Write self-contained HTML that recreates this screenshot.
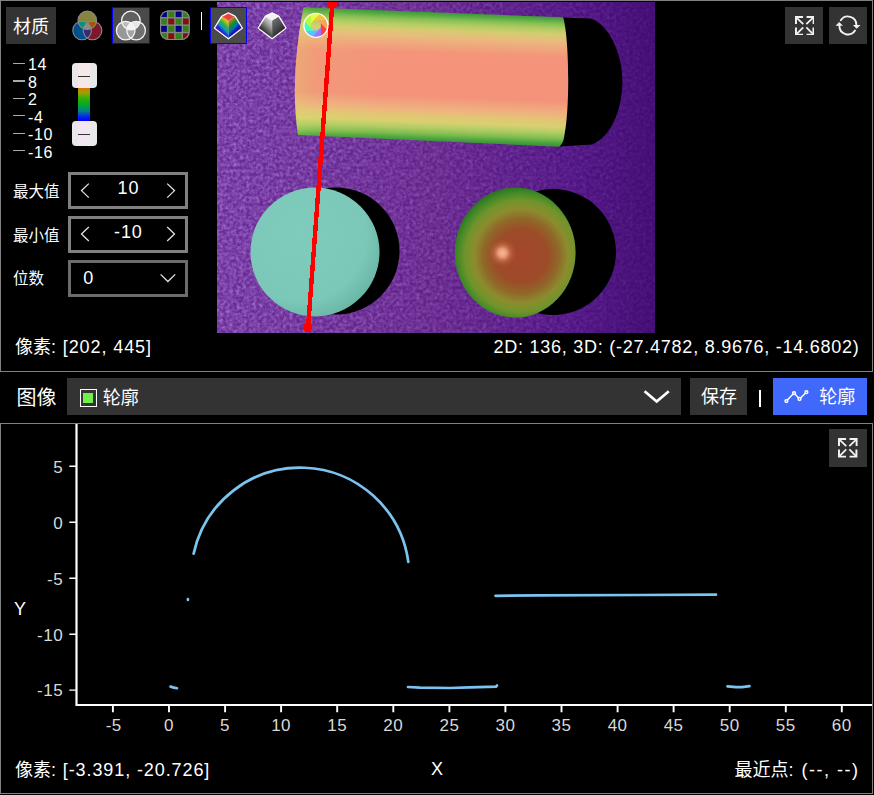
<!DOCTYPE html>
<html lang="zh">
<head>
<meta charset="utf-8">
<title>轮廓</title>
<style>
html,body{margin:0;padding:0;background:#000;}
body{width:874px;height:795px;position:relative;overflow:hidden;color:#fff;
  font-family:"Liberation Sans","Noto Sans CJK SC",sans-serif;font-size:18px;}
.abs{position:absolute;}
.panel{position:absolute;left:0;width:871px;border:1px solid #808080;background:#000;box-sizing:content-box;}
#top{top:0;height:370px;}
#bot{top:423px;height:369px;}
.btn{position:absolute;background:#333;}
.t{position:absolute;white-space:nowrap;line-height:1;letter-spacing:0.9px;}
.cj{letter-spacing:0;}
.sel{position:absolute;background:#4a4a4a;border:1px solid #0000ff;box-sizing:border-box;}
.tick{position:absolute;left:13px;width:12px;height:1px;background:#aaa;}
.tl{position:absolute;left:28px;font-size:16px;line-height:1;letter-spacing:0.6px;white-space:nowrap;}
.box{position:absolute;left:68px;width:120px;height:37px;border:3px solid #808080;box-sizing:border-box;}
.handle{position:absolute;left:71.500px;width:25px;height:25px;border-radius:4px;background:linear-gradient(90deg,#e8e8e8 0,#e8e8e8 6.500px,#f7e8e8 6.500px,#f7e8e8 18.500px,#e8e8e8 18.500px);}
.handle i{position:absolute;left:6.500px;top:13px;width:12px;height:1px;background:#333;}
</style>
</head>
<body>

<!-- ================= TOP PANEL ================= -->
<div class="panel" id="top"></div>

<!-- image area -->
<svg class="abs" style="left:217px;top:2px" width="438" height="331" viewBox="217 2 438 331">
  <defs>
    <linearGradient id="bgp" x1="0" y1="0" x2="1" y2="0">
      <stop offset="0" stop-color="#682e95"/>
      <stop offset="0.5" stop-color="#612286"/>
      <stop offset="0.8" stop-color="#4f1382"/>
      <stop offset="1" stop-color="#410a71"/>
    </linearGradient>
    <linearGradient id="cyl" gradientUnits="userSpaceOnUse" x1="430" y1="11.800" x2="425.300" y2="141">
      <stop offset="0" stop-color="#3c9438"/>
      <stop offset="0.03" stop-color="#58ac44"/>
      <stop offset="0.06" stop-color="#88c054"/>
      <stop offset="0.1" stop-color="#b4cc64"/>
      <stop offset="0.14" stop-color="#d4cc70"/>
      <stop offset="0.19" stop-color="#e8bc7c"/>
      <stop offset="0.25" stop-color="#f0a87c"/>
      <stop offset="0.32" stop-color="#f4947a"/>
      <stop offset="0.65" stop-color="#f4927a"/>
      <stop offset="0.75" stop-color="#f0b080"/>
      <stop offset="0.8" stop-color="#e4c474"/>
      <stop offset="0.853" stop-color="#d8d070"/>
      <stop offset="0.9" stop-color="#b0cc64"/>
      <stop offset="0.945" stop-color="#80bc50"/>
      <stop offset="0.975" stop-color="#50a840"/>
      <stop offset="1" stop-color="#3c9438"/>
    </linearGradient>
    <linearGradient id="cyl2" gradientUnits="userSpaceOnUse" x1="294" y1="0" x2="380" y2="0">
      <stop offset="0" stop-color="#d8e070" stop-opacity="0.3"/>
      <stop offset="0.25" stop-color="#d8e070" stop-opacity="0.1"/>
      <stop offset="1" stop-color="#d8e070" stop-opacity="0"/>
    </linearGradient>
    <radialGradient id="disc" cx="300" cy="235" r="95" gradientUnits="userSpaceOnUse">
      <stop offset="0" stop-color="#80ccbc"/>
      <stop offset="0.7" stop-color="#7cc8b8"/>
      <stop offset="0.9" stop-color="#6cb8a8"/>
      <stop offset="1" stop-color="#4c9484"/>
    </radialGradient>
    <radialGradient id="sph" cx="521" cy="256" r="70" gradientUnits="userSpaceOnUse">
      <stop offset="0" stop-color="#a6462c"/>
      <stop offset="0.38" stop-color="#9c4c28"/>
      <stop offset="0.54" stop-color="#906828"/>
      <stop offset="0.67" stop-color="#8c8c2e"/>
      <stop offset="0.8" stop-color="#70942c"/>
      <stop offset="0.92" stop-color="#3c8826"/>
      <stop offset="1" stop-color="#2c7020"/>
    </radialGradient>
    <filter id="noise" x="0" y="0" width="100%" height="100%" color-interpolation-filters="sRGB">
      <feTurbulence type="fractalNoise" baseFrequency="0.3" numOctaves="3" seed="11" result="n"/>
      <feColorMatrix in="n" type="matrix" values="0 0 0 0 0.686  0 0 0 0 0.47  0 0 0 0 0.863  1 1 0 0 -0.700"/>
      <feGaussianBlur stdDeviation="0.45"/>
    </filter>
    <linearGradient id="nmg" x1="0" y1="0" x2="1" y2="0">
      <stop offset="0" stop-color="#fff"/>
      <stop offset="0.5" stop-color="#8c8c8c"/>
      <stop offset="0.8" stop-color="#4d4d4d"/>
      <stop offset="1" stop-color="#262626"/>
    </linearGradient>
    <mask id="nmask" maskUnits="userSpaceOnUse" x="217" y="2" width="438" height="331"><rect x="217" y="2" width="438" height="331" fill="url(#nmg)"/></mask>
    <radialGradient id="hl" cx="502.400" cy="253" r="14" gradientUnits="userSpaceOnUse">
      <stop offset="0" stop-color="#fcb898"/>
      <stop offset="0.3" stop-color="#f4a484" stop-opacity="0.9"/>
      <stop offset="0.65" stop-color="#d07850" stop-opacity="0.4"/>
      <stop offset="1" stop-color="#c06030" stop-opacity="0"/>
    </radialGradient>
  </defs>
  <rect x="217" y="2" width="438" height="331" fill="url(#bgp)"/>
  <rect x="217" y="2" width="438" height="331" fill="#fff" filter="url(#noise)" mask="url(#nmask)"/>
  <!-- cylinder shadow -->
  <path d="M560 17.500L590 18.600C607 23 622 50 622.400 82C622 110 611 137 592 144.500L560 146.500Z" fill="#000"/>
  <!-- cylinder -->
  <path d="M303.500 7.300L563.200 17.300C569.500 40 569.800 108 564.600 134Q563.500 144 559 146.700L298 135Q289.500 78 303.500 7.300Z" fill="url(#cyl)"/>
  <path d="M303.500 7.300L563.200 17.300C569.500 40 569.800 108 564.600 134Q563.500 144 559 146.700L298 135Q289.500 78 303.500 7.300Z" fill="url(#cyl2)"/>
  <!-- disc -->
  <circle cx="336" cy="251" r="63.5" fill="#000"/>
  <circle cx="315" cy="252" r="64.5" fill="url(#disc)"/>
  <!-- sphere -->
  <circle cx="553" cy="252" r="63" fill="#000"/>
  <ellipse cx="515.200" cy="252.600" rx="60.400" ry="65" fill="url(#sph)"/>
  <circle cx="502.400" cy="253" r="14" fill="url(#hl)"/>
</svg>

<svg class="abs" style="left:296px;top:2px" width="50" height="334" viewBox="296 2 50 334">
  <line x1="332.300" y1="4" x2="308" y2="328" stroke="#f00" stroke-width="4.400" shape-rendering="crispEdges"/>
  <circle cx="332.100" cy="4" r="5" fill="#f00"/>
  <circle cx="307.600" cy="327.400" r="4.700" fill="#f00"/>
</svg>
<!-- top-left toolbar -->
<div class="btn" style="left:6px;top:7px;width:50px;height:37px;"></div>
<div class="t cj" style="left:13px;top:17.5px;font-size:18px;">材质</div>

<div class="sel" style="left:112px;top:7px;width:38px;height:37px;"></div>
<div class="sel" style="left:210px;top:7px;width:37px;height:37px;"></div>
<div class="abs" style="left:200.500px;top:12px;width:1.800px;height:18px;background:#fff;"></div>

<svg class="abs" style="left:60px;top:0" width="280" height="50" viewBox="60 0 280 50">
<defs><clipPath id="v1t"><circle cx="87.3" cy="20.4" r="9.3"/></clipPath><clipPath id="v1l"><circle cx="82.1" cy="30.5" r="9.3"/></clipPath><clipPath id="v1r"><circle cx="92.5" cy="30.5" r="9.3"/></clipPath></defs><circle cx="87.3" cy="20.4" r="9.3" fill="#86843e"/><circle cx="82.1" cy="30.5" r="9.3" fill="#00508c"/><circle cx="92.5" cy="30.5" r="9.3" fill="#7e1828"/><circle cx="82.1" cy="30.5" r="9.3" fill="#009478" clip-path="url(#v1t)"/><circle cx="92.5" cy="30.5" r="9.3" fill="#a85400" clip-path="url(#v1t)"/><circle cx="92.5" cy="30.5" r="9.3" fill="#3c2870" clip-path="url(#v1l)"/><g clip-path="url(#v1t)"><circle cx="92.5" cy="30.5" r="9.3" fill="#8c8c8c" clip-path="url(#v1l)"/></g><circle cx="87.3" cy="20.4" r="9.3" fill="none" stroke="#888" stroke-width="1.1"/><circle cx="82.1" cy="30.5" r="9.3" fill="none" stroke="#888" stroke-width="1.1"/><circle cx="92.5" cy="30.5" r="9.3" fill="none" stroke="#888" stroke-width="1.1"/>
<defs><clipPath id="v2t"><circle cx="130.9" cy="20.5" r="9.3"/></clipPath><clipPath id="v2l"><circle cx="125.7" cy="30.6" r="9.3"/></clipPath><clipPath id="v2r"><circle cx="136.1" cy="30.6" r="9.3"/></clipPath></defs><circle cx="130.9" cy="20.5" r="9.3" fill="#606060"/><circle cx="125.7" cy="30.6" r="9.3" fill="#989898"/><circle cx="136.1" cy="30.6" r="9.3" fill="#707070"/><circle cx="125.7" cy="30.6" r="9.3" fill="#bcbcbc" clip-path="url(#v2t)"/><circle cx="136.1" cy="30.6" r="9.3" fill="#e4e4e4" clip-path="url(#v2t)"/><circle cx="136.1" cy="30.6" r="9.3" fill="#a4a4a4" clip-path="url(#v2l)"/><g clip-path="url(#v2t)"><circle cx="136.1" cy="30.6" r="9.3" fill="#f2f2f2" clip-path="url(#v2l)"/></g><circle cx="130.9" cy="20.5" r="9.3" fill="none" stroke="#f4f4f4" stroke-width="1.3"/><circle cx="125.7" cy="30.6" r="9.3" fill="none" stroke="#f4f4f4" stroke-width="1.3"/><circle cx="136.1" cy="30.6" r="9.3" fill="none" stroke="#f4f4f4" stroke-width="1.3"/>
<defs><clipPath id="bay"><rect x="160.2" y="10.4" width="29.5" height="29.5" rx="8" ry="8"/></clipPath></defs><g clip-path="url(#bay)"><rect x="160.2" y="10.4" width="29.5" height="29.5" fill="#858585"/><rect x="160.90" y="11.10" width="5.97" height="5.97" fill="#000080"/><rect x="168.27" y="11.10" width="5.97" height="5.97" fill="#34801f"/><rect x="175.65" y="11.10" width="5.97" height="5.97" fill="#000080"/><rect x="183.02" y="11.10" width="5.97" height="5.97" fill="#34801f"/><rect x="160.90" y="18.47" width="5.97" height="5.97" fill="#34801f"/><rect x="168.27" y="18.47" width="5.97" height="5.97" fill="#80120a"/><rect x="175.65" y="18.47" width="5.97" height="5.97" fill="#34801f"/><rect x="183.02" y="18.47" width="5.97" height="5.97" fill="#80120a"/><rect x="160.90" y="25.85" width="5.97" height="5.97" fill="#000080"/><rect x="168.27" y="25.85" width="5.97" height="5.97" fill="#34801f"/><rect x="175.65" y="25.85" width="5.97" height="5.97" fill="#000080"/><rect x="183.02" y="25.85" width="5.97" height="5.97" fill="#34801f"/><rect x="160.90" y="33.23" width="5.97" height="5.97" fill="#34801f"/><rect x="168.27" y="33.23" width="5.97" height="5.97" fill="#80120a"/><rect x="175.65" y="33.23" width="5.97" height="5.97" fill="#34801f"/><rect x="183.02" y="33.23" width="5.97" height="5.97" fill="#80120a"/></g><rect x="160.6" y="10.8" width="28.7" height="28.7" rx="8" ry="8" fill="none" stroke="#858585" stroke-width="1.2"/>
<defs><linearGradient id="p1l" gradientUnits="userSpaceOnUse" x1="226.0" y1="19" x2="215.5" y2="29.5"><stop offset="0" stop-color="#e8b820"/><stop offset="0.15" stop-color="#b4c020"/><stop offset="0.35" stop-color="#30b040"/><stop offset="0.55" stop-color="#10a0b0"/><stop offset="0.75" stop-color="#1030e0"/><stop offset="0.9" stop-color="#5010c0"/><stop offset="1" stop-color="#a000a0"/></linearGradient><linearGradient id="p1r" gradientUnits="userSpaceOnUse" x1="230.8" y1="19" x2="241.3" y2="29.5"><stop offset="0" stop-color="#b09018"/><stop offset="0.15" stop-color="#708c18"/><stop offset="0.35" stop-color="#108840"/><stop offset="0.55" stop-color="#087898"/><stop offset="0.75" stop-color="#0818c8"/><stop offset="0.9" stop-color="#4808a8"/><stop offset="1" stop-color="#900090"/></linearGradient></defs><polygon points="228.4,12.7 235.3,16.1 242.6,28.2 228.4,39.0 214.2,28.2 221.5,16.1" fill="#fff" stroke="#fff" stroke-width="1" stroke-linejoin="round"/><polygon points="222.2,16.700 228.4,20.600 228.4,37.900 215.2,28.100" fill="url(#p1l)"/><polygon points="234.6,16.700 228.4,20.600 228.4,37.900 241.6,28.100" fill="url(#p1r)"/><polygon points="228.4,13.600 234.6,16.700 228.4,20.600 222.2,16.700" fill="#f04040"/>
<defs><linearGradient id="p2l" gradientUnits="userSpaceOnUse" x1="269.70000000000005" y1="19" x2="259.20000000000005" y2="29.5"><stop offset="0" stop-color="#d4d4d4"/><stop offset="0.35" stop-color="#9c9c9c"/><stop offset="0.7" stop-color="#545454"/><stop offset="1" stop-color="#181818"/></linearGradient><linearGradient id="p2r" gradientUnits="userSpaceOnUse" x1="274.5" y1="19" x2="285.0" y2="29.5"><stop offset="0" stop-color="#6c6c6c"/><stop offset="0.4" stop-color="#545454"/><stop offset="0.8" stop-color="#343434"/><stop offset="1" stop-color="#1c1c1c"/></linearGradient></defs><polygon points="272.1,12.7 279.0,16.1 286.3,28.2 272.1,39.0 257.9,28.2 265.2,16.1" fill="#fff" stroke="#fff" stroke-width="1" stroke-linejoin="round"/><polygon points="265.9,16.700 272.1,20.600 272.1,37.900 258.9,28.100" fill="url(#p2l)"/><polygon points="278.3,16.700 272.1,20.600 272.1,37.900 285.3,28.100" fill="url(#p2r)"/><polygon points="272.1,13.600 278.3,16.700 272.1,20.600 265.9,16.700" fill="#f2f2f2"/>
<path d="M321.00 23.29L326.95 29.24A11.7 11.7 0 0 1 321.00 35.93Z" fill="#ff4040" stroke="#ff4040" stroke-width="0.3"/><path d="M321.00 27.51L321.00 35.93A11.7 11.7 0 0 1 312.06 36.45Z" fill="#9878ff" stroke="#9878ff" stroke-width="0.3"/><path d="M318.01 30.50L312.06 36.45A11.7 11.7 0 0 1 305.37 30.50Z" fill="#50c8ff" stroke="#50c8ff" stroke-width="0.3"/><path d="M313.79 30.50L305.37 30.50A11.7 11.7 0 0 1 304.85 21.56Z" fill="#40ffc0" stroke="#40ffc0" stroke-width="0.3"/><path d="M310.80 27.51L304.85 21.56A11.7 11.7 0 0 1 310.80 14.87Z" fill="#b0ff40" stroke="#b0ff40" stroke-width="0.3"/><path d="M310.80 23.29L310.80 14.87A11.7 11.7 0 0 1 319.74 14.35Z" fill="#e8ff40" stroke="#e8ff40" stroke-width="0.3"/><path d="M313.79 20.30L319.74 14.35A11.7 11.7 0 0 1 326.43 20.30Z" fill="#f0c840" stroke="#f0c840" stroke-width="0.3"/><path d="M318.01 20.30L326.43 20.30A11.7 11.7 0 0 1 326.95 29.24Z" fill="#ffa060" stroke="#ffa060" stroke-width="0.3"/><circle cx="315.9" cy="25.4" r="12.0" fill="none" stroke="#fff" stroke-width="1.3"/>
</svg>
<!-- colour scale -->
<div class="tick" style="top:63px"></div><div class="tl" style="top:57px">14</div>
<div class="tick" style="top:80px;height:2px"></div><div class="tl" style="top:74.700px">8</div>
<div class="tick" style="top:98px"></div><div class="tl" style="top:92px">2</div>
<div class="tick" style="top:115px"></div><div class="tl" style="top:109.500px">-4</div>
<div class="tick" style="top:133px"></div><div class="tl" style="top:127px">-10</div>
<div class="tick" style="top:150px"></div><div class="tl" style="top:144.500px">-16</div>

<div class="abs" style="left:78px;top:88px;width:12px;height:33px;background:linear-gradient(180deg,#d87800 0,#a0a000 14%,#30b000 32%,#00a830 52%,#008090 70%,#0020f0 88%,#0000ff 100%);"></div>
<div class="handle" style="top:63px"><i></i></div>
<div class="handle" style="top:121px;background:linear-gradient(90deg,#e8e8e8 0,#e8e8e8 6.500px,#f3e6f3 6.500px,#f3e6f3 18.500px,#e8e8e8 18.500px);"><i></i></div>

<!-- numeric boxes -->
<div class="t cj" style="left:13px;top:184px;font-size:15.500px;">最大值</div>
<div class="box" style="top:172px;"></div>
<div class="t" style="left:117.500px;top:179.300px;font-size:18px;">10</div>

<div class="t cj" style="left:13px;top:227.500px;font-size:15.500px;">最小值</div>
<div class="box" style="top:215.500px;"></div>
<div class="t" style="left:114px;top:222.800px;font-size:18px;">-10</div>

<div class="t cj" style="left:13px;top:271px;font-size:15.500px;">位数</div>
<div class="box" style="top:259.500px;border-color:#6c6c6c;"></div>
<div class="t" style="left:83.300px;top:268.500px;font-size:18px;">0</div>

<svg class="abs" style="left:68px;top:172px" width="121" height="126" viewBox="68 172 121 126" fill="none" stroke="#e4e4e4" stroke-width="1.300">
  <path d="M88.800 183.600L81.500 190.600L88.800 197.600M167.200 183.600L174.500 190.600L167.200 197.600"/>
  <path d="M88.800 227L81.500 234L88.800 241M167.200 227L174.500 234L167.200 241"/>
  <path d="M160.600 274.400L167.900 281.500L175.200 274.400"/>
</svg>
<!-- status texts -->
<div class="t" style="left:15px;top:338px;font-size:18px;"><span class="cj">像素</span>: [202, 445]</div>
<div class="t" style="right:14.500px;top:338px;font-size:18px;letter-spacing:0.75px;">2D: 136, 3D: (-27.4782, 8.9676, -14.6802)</div>

<!-- top-right buttons -->
<div class="btn" style="left:785px;top:7px;width:38px;height:37px;"></div>
<svg class="abs" style="left:794.600px;top:15.800px" width="19.600" height="19.600" viewBox="0 0 20 20"><g fill="none" stroke="#f2f2f2" stroke-width="2" stroke-linejoin="miter"><path d="M1 8.200V1H8.200M18.800 11.800V19H11.800M11.800 1H19V8.200M8.200 19H1V11.800"/><path d="M1.300 1.300L8.400 8.400M18.700 18.700L11.600 11.600M18.700 1.300L11.600 8.400M1.300 18.700L8.400 11.600" stroke-width="1.800"/></g></svg>
<div class="btn" style="left:829px;top:7px;width:38px;height:37px;"></div>
<svg class="abs" style="left:829px;top:7px" width="38" height="37" viewBox="829 7 38 37">
  <g fill="none" stroke="#f2f2f2" stroke-width="1.900" stroke-linecap="round">
    <path d="M840.800 20.300A8.500 8.500 0 0 1 856.400 25"/>
    <path d="M855 30.600A8.500 8.500 0 0 1 839.400 25.800"/>
  </g>
  <path d="M852.900 25H860.500L856.700 28.700Z M835.500 25.800H842.900L839.200 22.100Z" fill="#f2f2f2"/>
</svg>

<!-- ================= MIDDLE TOOLBAR ================= -->
<div class="t cj" style="left:16.500px;top:388px;font-size:20px;">图像</div>
<div class="btn" style="left:67px;top:378px;width:614px;height:37px;"></div>
<div class="abs" style="left:80px;top:389px;width:17px;height:18px;border:1.5px solid #fff;box-sizing:border-box;"></div>
<div class="abs" style="left:83px;top:393px;width:10.300px;height:10.200px;background:#70f048;"></div>
<div class="t cj" style="left:102.800px;top:388.500px;font-size:18px;">轮廓</div>
<div class="btn" style="left:690px;top:378px;width:57px;height:37px;"></div>
<div class="t cj" style="left:701px;top:388px;font-size:18px;">保存</div>
<div class="abs" style="left:759px;top:390px;width:2px;height:17px;background:#fff;"></div>
<div class="btn" style="left:773px;top:378px;width:94px;height:37px;background:#4068fa;"></div>
<div class="t cj" style="left:819.200px;top:388px;font-size:18px;">轮廓</div>

<svg class="abs" style="left:640px;top:385px" width="36" height="24" viewBox="640 385 36 24" fill="none" stroke="#fff" stroke-width="2.600">
  <path d="M644.600 391.200L656.700 401.600L668.800 391.200"/>
</svg>
<svg class="abs" style="left:780px;top:386px" width="34" height="22" viewBox="780 386 34 22" fill="none" stroke="#fff" stroke-width="1.500">
  <path d="M786.400 401.100L794 393.100L799.500 399L806.400 392.200"/>
  <g fill="#4068fa"><circle cx="786.400" cy="401.100" r="1.400"/><circle cx="794" cy="393.100" r="1.400"/><circle cx="799.500" cy="399" r="1.400"/><circle cx="806.400" cy="392.200" r="1.400"/></g>
</svg>
<!-- ================= BOTTOM PANEL ================= -->
<div class="panel" id="bot"></div>
<svg class="abs" style="left:0;top:424px" width="872" height="369" viewBox="0 424 872 369" font-family="'Liberation Sans',sans-serif" font-size="17" fill="#d8d8d8">
<path d="M76.500 424V705H872" fill="none" stroke="#fff" stroke-width="2.200"/>
<path d="M112.9 705v7.200M169.0 705v7.200M225.1 705v7.200M281.1 705v7.200M337.2 705v7.200M393.3 705v7.200M449.4 705v7.200M505.4 705v7.200M561.5 705v7.200M617.6 705v7.200M673.6 705v7.200M729.7 705v7.200M785.8 705v7.200M841.8 705v7.200" stroke="#fff" stroke-width="1.900" fill="none"/>
<path d="M69.300 690.1h7M69.300 634.2h7M69.300 578.2h7M69.300 522.3h7M69.300 466.3h7" stroke="#fff" stroke-width="1.400" fill="none"/>
<text x="113.7" y="731" text-anchor="middle" letter-spacing="0.500">-5</text>
<text x="169.0" y="731" text-anchor="middle" letter-spacing="0.500">0</text>
<text x="225.1" y="731" text-anchor="middle" letter-spacing="0.500">5</text>
<text x="281.1" y="731" text-anchor="middle" letter-spacing="0.500">10</text>
<text x="337.2" y="731" text-anchor="middle" letter-spacing="0.500">15</text>
<text x="393.3" y="731" text-anchor="middle" letter-spacing="0.500">20</text>
<text x="449.4" y="731" text-anchor="middle" letter-spacing="0.500">25</text>
<text x="505.4" y="731" text-anchor="middle" letter-spacing="0.500">30</text>
<text x="561.5" y="731" text-anchor="middle" letter-spacing="0.500">35</text>
<text x="617.6" y="731" text-anchor="middle" letter-spacing="0.500">40</text>
<text x="673.6" y="731" text-anchor="middle" letter-spacing="0.500">45</text>
<text x="729.7" y="731" text-anchor="middle" letter-spacing="0.500">50</text>
<text x="785.8" y="731" text-anchor="middle" letter-spacing="0.500">55</text>
<text x="841.8" y="731" text-anchor="middle" letter-spacing="0.500">60</text>
<text x="63.200" y="696.4" text-anchor="end" letter-spacing="0.500">-15</text>
<text x="63.200" y="640.5" text-anchor="end" letter-spacing="0.500">-10</text>
<text x="63.200" y="584.5" text-anchor="end" letter-spacing="0.500">-5</text>
<text x="63.200" y="528.6" text-anchor="end" letter-spacing="0.500">0</text>
<text x="63.200" y="472.6" text-anchor="end" letter-spacing="0.500">5</text>
<g fill="none" stroke="#7cc4f0" stroke-width="2.700" stroke-linecap="round">
<path d="M193.600 553.700A109.100 109.100 0 0 1 408.300 561.800"/>
<path d="M187.900 599.200v0.800"/>
<path d="M495.500 595.800L540 595.300L640 595L716 594.700"/>
<path d="M408 687L420 687.600L450 688L470 687.400L496 686.600L497 685.500"/>
<path d="M170.500 686.600L174 687.600L177 688.200"/>
<path d="M727.500 686.400L736 687.200L742 687.200L749.500 686.200"/>
</g>
</svg>
<div class="btn" style="left:829px;top:429px;width:38px;height:38px;"></div>
<svg class="abs" style="left:838.100px;top:438.100px" width="19.600" height="19.600" viewBox="0 0 20 20"><g fill="none" stroke="#f2f2f2" stroke-width="2" stroke-linejoin="miter"><path d="M1 8.200V1H8.200M18.800 11.800V19H11.800M11.800 1H19V8.200M8.200 19H1V11.800"/><path d="M1.300 1.300L8.400 8.400M18.700 18.700L11.600 11.600M18.700 1.300L11.600 8.400M1.300 18.700L8.400 11.600" stroke-width="1.800"/></g></svg>

<div class="t" style="left:14px;top:600px;font-size:18px;">Y</div>
<div class="t" style="left:15px;top:760.500px;font-size:18px;"><span class="cj">像素</span>: [-3.391, -20.726]</div>
<div class="t" style="left:431px;top:759.500px;font-size:18px;">X</div>
<div class="t" style="right:14.500px;top:760.500px;font-size:18px;letter-spacing:1.5px;"><span class="cj">最近点</span>: (--, --)</div>

</body>
</html>
